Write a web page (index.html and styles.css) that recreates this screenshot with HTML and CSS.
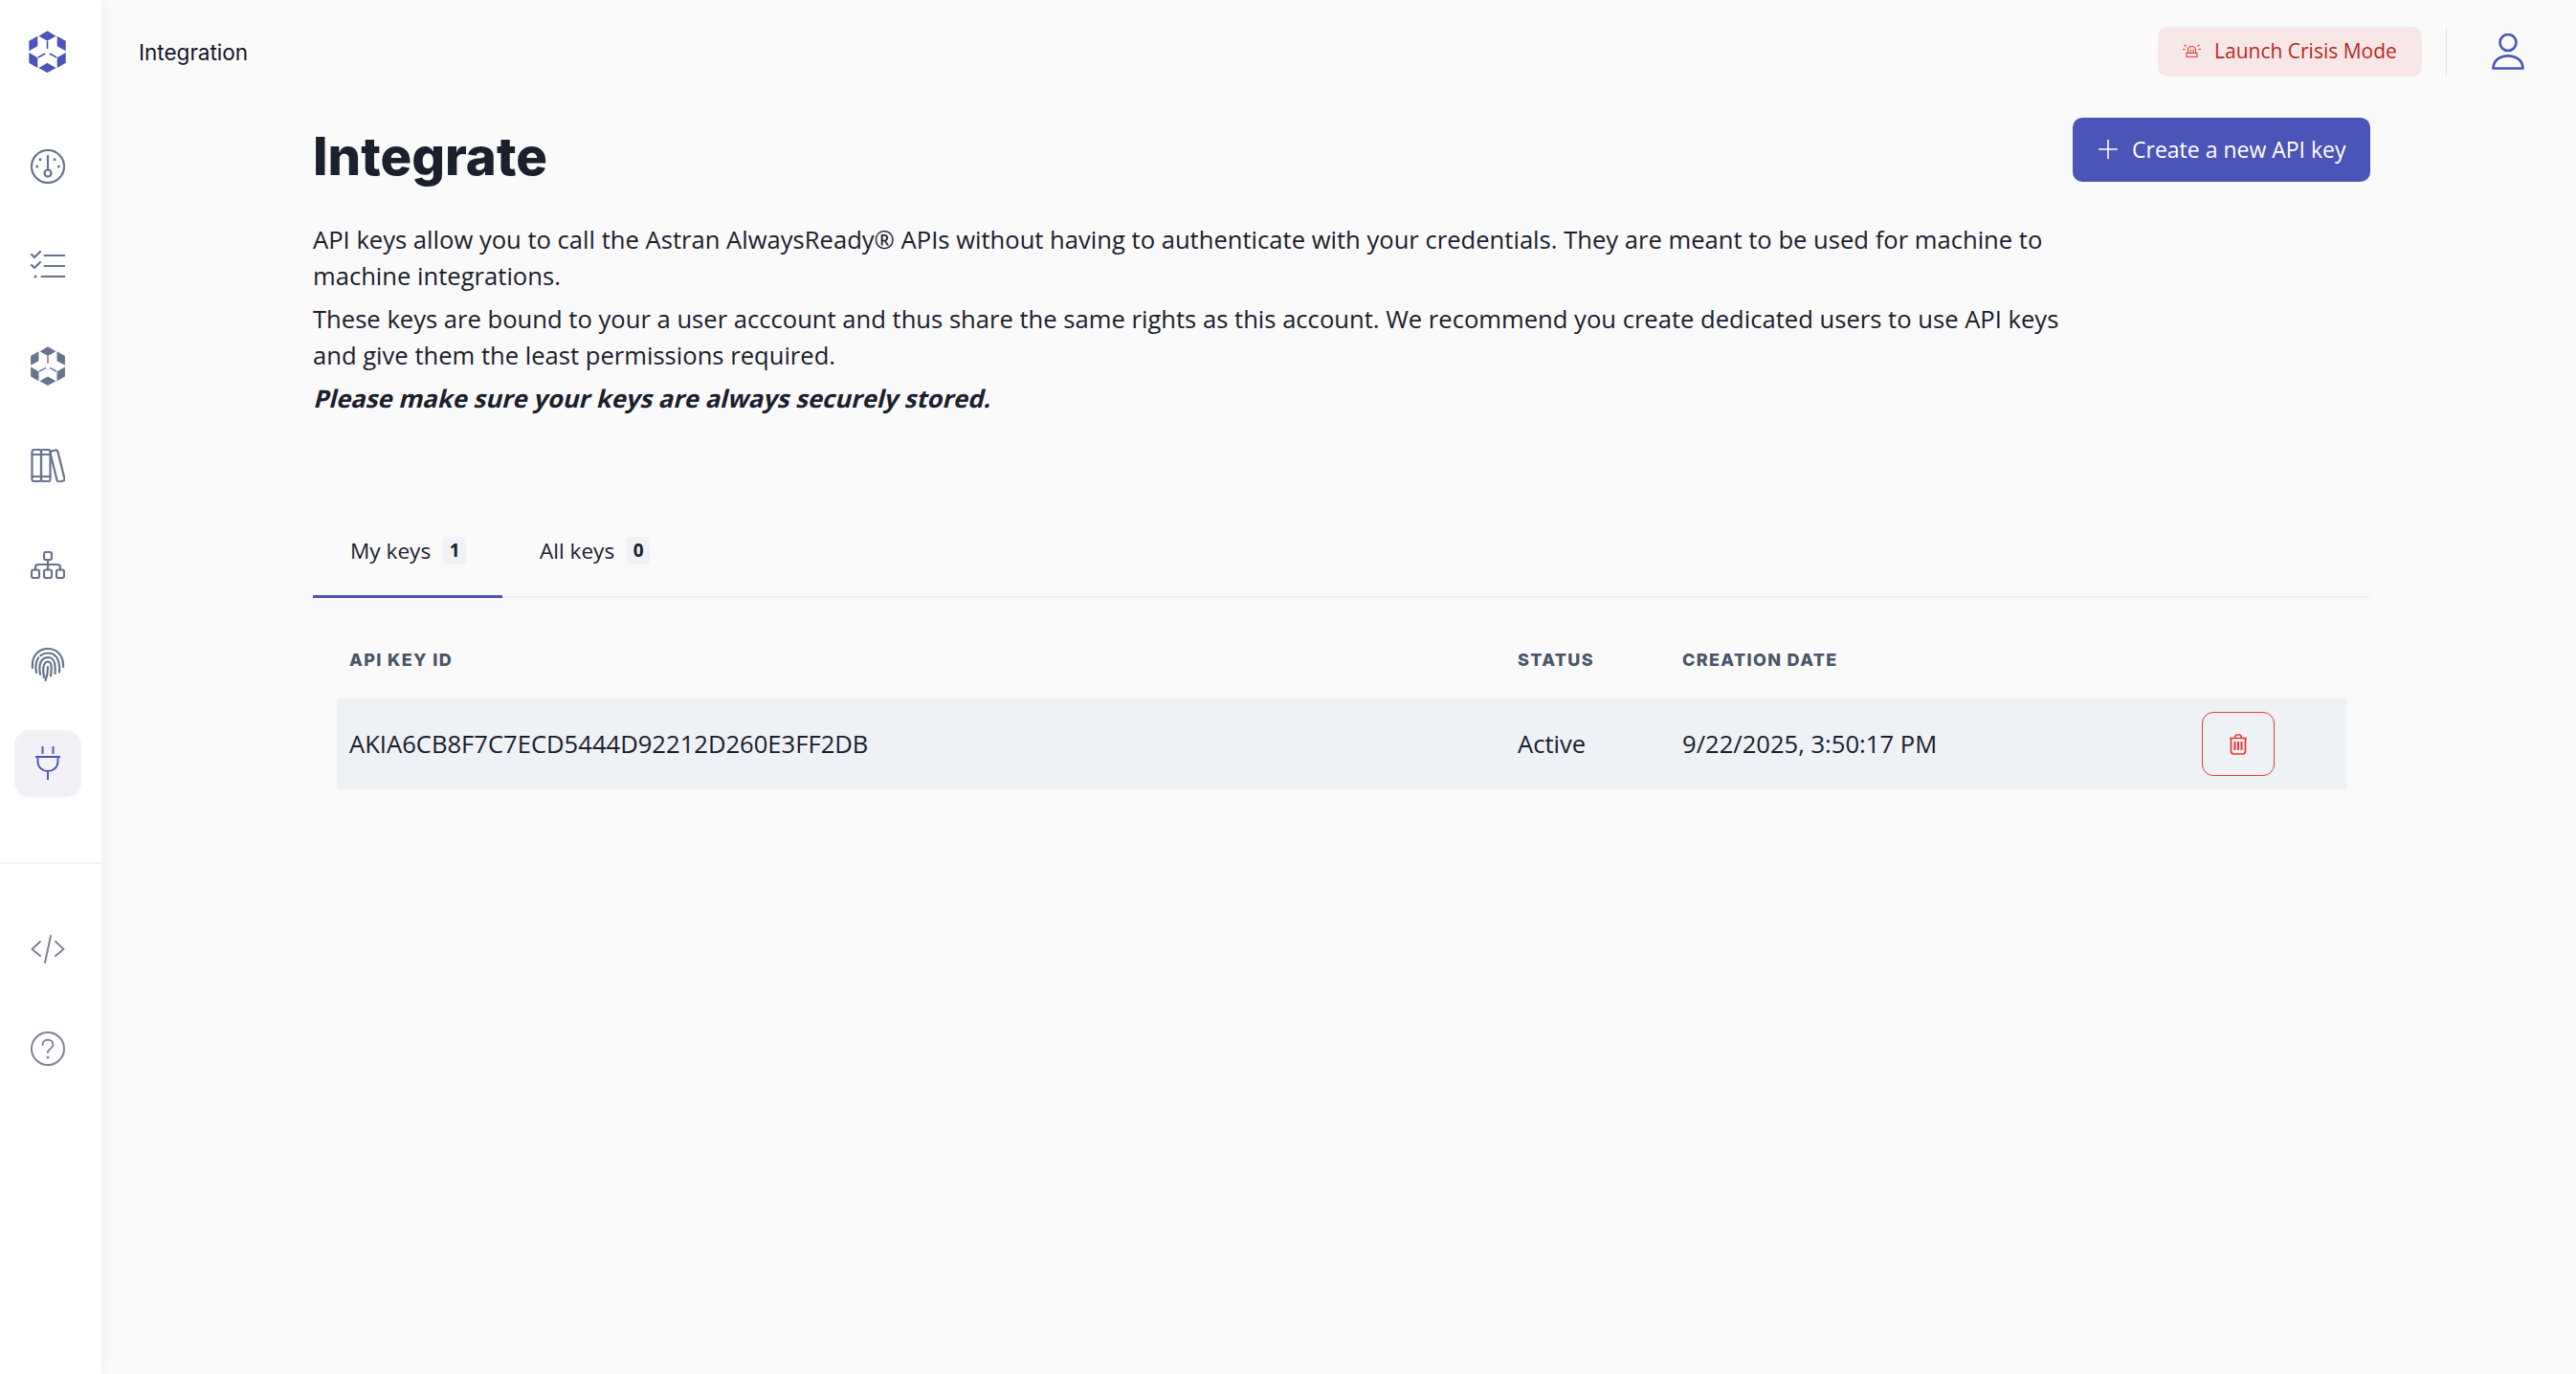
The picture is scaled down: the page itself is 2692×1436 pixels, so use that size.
FILE: index.html
```html
<!DOCTYPE html>
<html lang="en">
<head>
<meta charset="utf-8">
<title>Integration</title>
<link rel="stylesheet" href="styles.css">
</head>
<body>
<svg class="defs" width="0" height="0" aria-hidden="true">
  <symbol id="hex" viewBox="0 0 38.4 44">
    <path class="fill" d="M19.2.3l9.1 5.4-9.1 5-9.1-5zM29.4 5.700l9 5v10.600l-9-5zM9 5.700l-9 5v10.600l9-5zM38.400 23v10.700L29.400 39V28.200zM0 23v10.700L9 39V28.200zM19.200 33.700l9.100 5.300-9.100 5-9.100-5z"/>
    <path class="thin" d="M19.200 11v8M9.500 28l7.500-4M28.900 28l-7.500-4"/>
  </symbol>
</svg>
<div class="app">
  <aside class="sidebar">
    <div class="logo"><svg class="logo-mark"><use href="#hex"/></svg></div>
    <nav class="nav">
      <a class="nav-item"><svg class="ico" viewBox="0 0 36 36"><circle cx="18" cy="18" r="17"/><path d="M18 7v14.500"/><circle cx="18" cy="25" r="3.500"/><path class="dot" d="M10 10.700h.01M25 10.700h.01M6.700 18h.01M29.300 18h.01"/></svg></a>
      <a class="nav-item"><svg class="ico" viewBox="0 0 36 36"><path d="M14.500 7h21M14.500 18h21M11.500 29h24M1 6l3 3 6-6M1 17l3 3 6-6"/><path class="dot" d="M5 29h.01"/></svg></a>
      <a class="nav-item"><svg class="ico-hex"><use href="#hex"/></svg></a>
      <a class="nav-item"><svg class="ico" viewBox="0 0 36 36"><rect x="1.500" y="2" width="9.500" height="33" rx="2"/><rect x="11" y="2" width="9.500" height="33" rx="2"/><path d="M1.500 7h19M1.500 30h19"/><rect x="24" y="2.500" width="8" height="33" rx="2" transform="rotate(-14 28 19)"/></svg></a>
      <a class="nav-item"><svg class="ico" viewBox="0 0 36 36"><rect x="14" y="5" width="8" height="8" rx="2"/><rect x="1" y="23.500" width="8" height="8.500" rx="2"/><rect x="14" y="23.500" width="8" height="8.500" rx="2"/><rect x="27" y="23.500" width="8" height="8.500" rx="2"/><path d="M18 13v10.500M5 23.500V21q0-3 3-3h20q3 0 3 3v2.500"/></svg></a>
      <a class="nav-item"><svg class="ico" viewBox="0 0 36 36"><path d="M2 22C.5 9 9 2 18 2c9 0 17 7 16 19" stroke-dasharray="44 2 30"/><path d="M6 27C3.500 15 9 6.500 18 6.500c8 0 13 6 12 20" stroke-dasharray="16 3 44"/><path d="M10 29C8 17 11 11.500 18 11c5.500 0 8.500 4 7.500 17"/><path d="M14 32c-1.500-7-1.500-16 4-16.500 3.500 0 4.500 3.500 3 15"/><path d="M15.500 35c2-5 2.500-9 2.500-14"/></svg></a>
      <a class="nav-item active"><svg class="ico plug" viewBox="0 0 36 36"><path d="M12.500 0v8M23.500 0v8M5 11h26M7.500 11v5c0 6 5 10 10.500 10s10.500-4 10.500-10v-5M18 26v9"/></svg></a>
    </nav>
    <nav class="nav-secondary">
      <a class="nav-item"><svg class="ico muted" viewBox="0 0 36 36"><path d="M10 10L1.500 18 10 25M26 10l8.500 8L26 25M21 4l-6 28"/></svg></a>
      <a class="nav-item"><svg class="ico muted" viewBox="0 0 36 36"><circle cx="18" cy="18" r="17"/><path d="M12.500 14c0-7 11-7 11 0 0 4-5.500 4-5.500 8"/><path class="dot" d="M18 27h.01"/></svg></a>
    </nav>
  </aside>
  <div class="page">
    <header class="topbar">
      <span class="crumb">Integration</span>
      <div class="top-actions">
        <button class="crisis"><svg class="crisis-ico" viewBox="0 0 19 16"><path d="M5.500 10V7.500Q5.500 3.500 9.500 3.500t4 4V10M4 10.500h11v4H4zM8.500 6.500L8 10M11 6.500V10M1.500 2l2 1.500M17.500 2l-2 1.500M0 6.500h2.500M19 6.500h-2.500"/></svg>Launch Crisis Mode</button>
        <span class="vsep"></span>
        <svg class="user" viewBox="0 0 34 38"><circle cx="17" cy="9.500" r="8.500"/><path d="M1.500 36.500c0-17.500 31-17.500 31 0z"/></svg>
      </div>
    </header>
    <main class="content">
      <div class="title-row">
        <h1>Integrate</h1>
        <button class="primary"><svg class="plus" viewBox="0 0 20 20"><path d="M10 0v20M0 10h20"/></svg>Create a new API key</button>
      </div>
      <div class="intro">
        <p>API keys allow you to call the Astran AlwaysReady® APIs without having to authenticate with your credentials. They are meant to be used for machine to machine integrations.</p>
        <p>These keys are bound to your a user acccount and thus share the same rights as this account. We recommend you create dedicated users to use API keys and give them the least permissions required.</p>
        <p class="warn">Please make sure your keys are always securely stored.</p>
      </div>
      <div class="tabs">
        <a class="tab current">My keys <span class="badge">1</span></a>
        <a class="tab">All keys <span class="badge">0</span></a>
      </div>
      <div class="table">
        <div class="thead">
          <span>API KEY ID</span><span>STATUS</span><span>CREATION DATE</span><span></span>
        </div>
        <div class="trow">
          <span>AKIA6CB8F7C7ECD5444D92212D260E3FF2DB</span>
          <span>Active</span>
          <span>9/22/2025, 3:50:17 PM</span>
          <span><button class="del"><svg class="trash" viewBox="0 0 20 22"><path d="M1 4.500h18M6.500 4.500l.6-2.500q.3-1 1.400-1h3q1.100 0 1.400 1l.6 2.500M2.500 4.500V18q0 3 3 3h9q3 0 3-3V4.500"/><path class="bars" d="M6.500 8v9M10 8v9M13.500 8v9"/></svg></button></span>
        </div>
      </div>
    </main>
  </div>
</div>
</body>
</html>
```

FILE: styles.css
```css
* { box-sizing: border-box; }
html, body { margin: 0; height: 100%; }
body { background: #fafafa; color: #1a202c; font-family: "Open Sans", sans-serif; }
.defs { position: absolute; }
.app { display: flex; min-height: 1436px; }
button { font-family: inherit; cursor: pointer; }

.sidebar { width: 106px; flex: none; background: #fff; box-shadow: 0 0 14px rgba(0,0,0,.05); display: flex; flex-direction: column; color: #66748c; }
.logo { height: 108px; padding-right: 7px; display: flex; align-items: center; justify-content: center; color: #4b55b7; }
.logo-mark { width: 39px; height: 44px; }
.fill { fill: currentColor; stroke: none; }
.thin { fill: none; stroke: currentColor; stroke-width: 1.6; }
.nav { display: flex; flex-direction: column; gap: 34px; padding: 31px 7px 68px 0; border-bottom: 2px solid #f3f3f5; align-items: center; }
.nav-secondary { display: flex; flex-direction: column; gap: 34px; padding: 54px 7px 0 0; align-items: center; }
.nav-item { width: 70px; height: 70px; border-radius: 16px; display: flex; align-items: center; justify-content: center; }
.nav-item.active { background: #f2f2f6; color: #4b55b7; }
.ico { width: 36px; height: 36px; fill: none; stroke: currentColor; stroke-width: 2.2; stroke-linecap: round; stroke-linejoin: round; }
.ico.plug { stroke-width: 1.900; stroke-linecap: butt; }
.ico .dot { stroke-width: 3; }
.ico.muted { color: #7f8399; stroke-width: 2; }
.ico-hex { width: 36px; height: 41px; }

.page { flex: 1; min-width: 0; }
.topbar { height: 108px; display: flex; align-items: center; justify-content: space-between; padding: 0 54px 0 39px; }
.crumb { font-family: Inter, sans-serif; font-size: 22.500px; color: #14152b; }
.top-actions { display: flex; align-items: center; }
.crisis { width: 276px; height: 52px; border: 0; border-radius: 10px; background: #f8e7e7; color: #b9281f; font-size: 21px; display: flex; align-items: center; gap: 14px; padding: 0 0 2px 26px; }
.crisis-ico { width: 19px; height: 16px; fill: none; stroke: #d8433a; stroke-width: 1.1; }
.vsep { width: 1px; height: 52px; background: #e3e5ee; margin: 0 47px 0 25px; }
.user { width: 34px; height: 38px; fill: none; stroke: #4b55b7; stroke-width: 2.600; stroke-linejoin: round; }

.content { padding: 15px 0 0 221px; margin-right: 215px; }
.title-row { display: flex; align-items: flex-start; justify-content: space-between; height: 75px; }
h1 { margin: 0; font-family: Inter, sans-serif; font-size: 54.500px; font-weight: 800; line-height: 80px; color: #1a202c; }
.primary { width: 311px; height: 67px; border: 0; border-radius: 10px; background: #4b55b7; color: #fff; font-size: 23px; display: flex; align-items: center; gap: 15px; padding: 0 0 2px 27px; }
.plus { width: 20px; height: 20px; fill: none; stroke: #fff; stroke-width: 1.600; }
.intro { width: 1850px; padding-top: 34px; font-size: 25.600px; line-height: 38px; }
.intro p { margin: 0 0 7px; }
.warn { font-weight: 700; display: inline-block; transform: skewX(-14deg); transform-origin: left 28px; }

.tabs { display: flex; margin-top: 90px; border-bottom: 2px solid #f1f1f6; height: 92px; }
.tab { width: 198px; padding-left: 39px; display: flex; align-items: center; gap: 13px; height: 92px; font-size: 22.600px; padding-bottom: 5px; border-bottom: 3px solid transparent; margin-bottom: -2px; }
.tab.current { border-bottom-color: #4b55b7; }
.badge { width: 24px; height: 29px; border-radius: 4px; background: #f0f2f7; font-size: 19px; font-weight: 700; display: flex; align-items: center; justify-content: center; }

.table { padding: 0 25px; }
.thead, .trow { display: grid; grid-template-columns: 1221px 172px 543px 164px; align-items: center; }
.thead { height: 105px; font-family: Inter, sans-serif; font-size: 18px; font-weight: 800; letter-spacing: 1.350px; color: #4a5568; padding-top: 24px; }
.trow { height: 95px; background: #eef1f6; font-size: 25.600px; }
.thead span, .trow span { padding-left: 13px; }
.del { width: 76px; height: 67px; border: 1.500px solid #ea3a30; border-radius: 12px; background: transparent; display: flex; align-items: center; justify-content: center; padding: 0; }
.trash { width: 20px; height: 22px; fill: none; stroke: #ea3a30; stroke-width: 1.700; }
.bars { stroke-width: 2; }
```
